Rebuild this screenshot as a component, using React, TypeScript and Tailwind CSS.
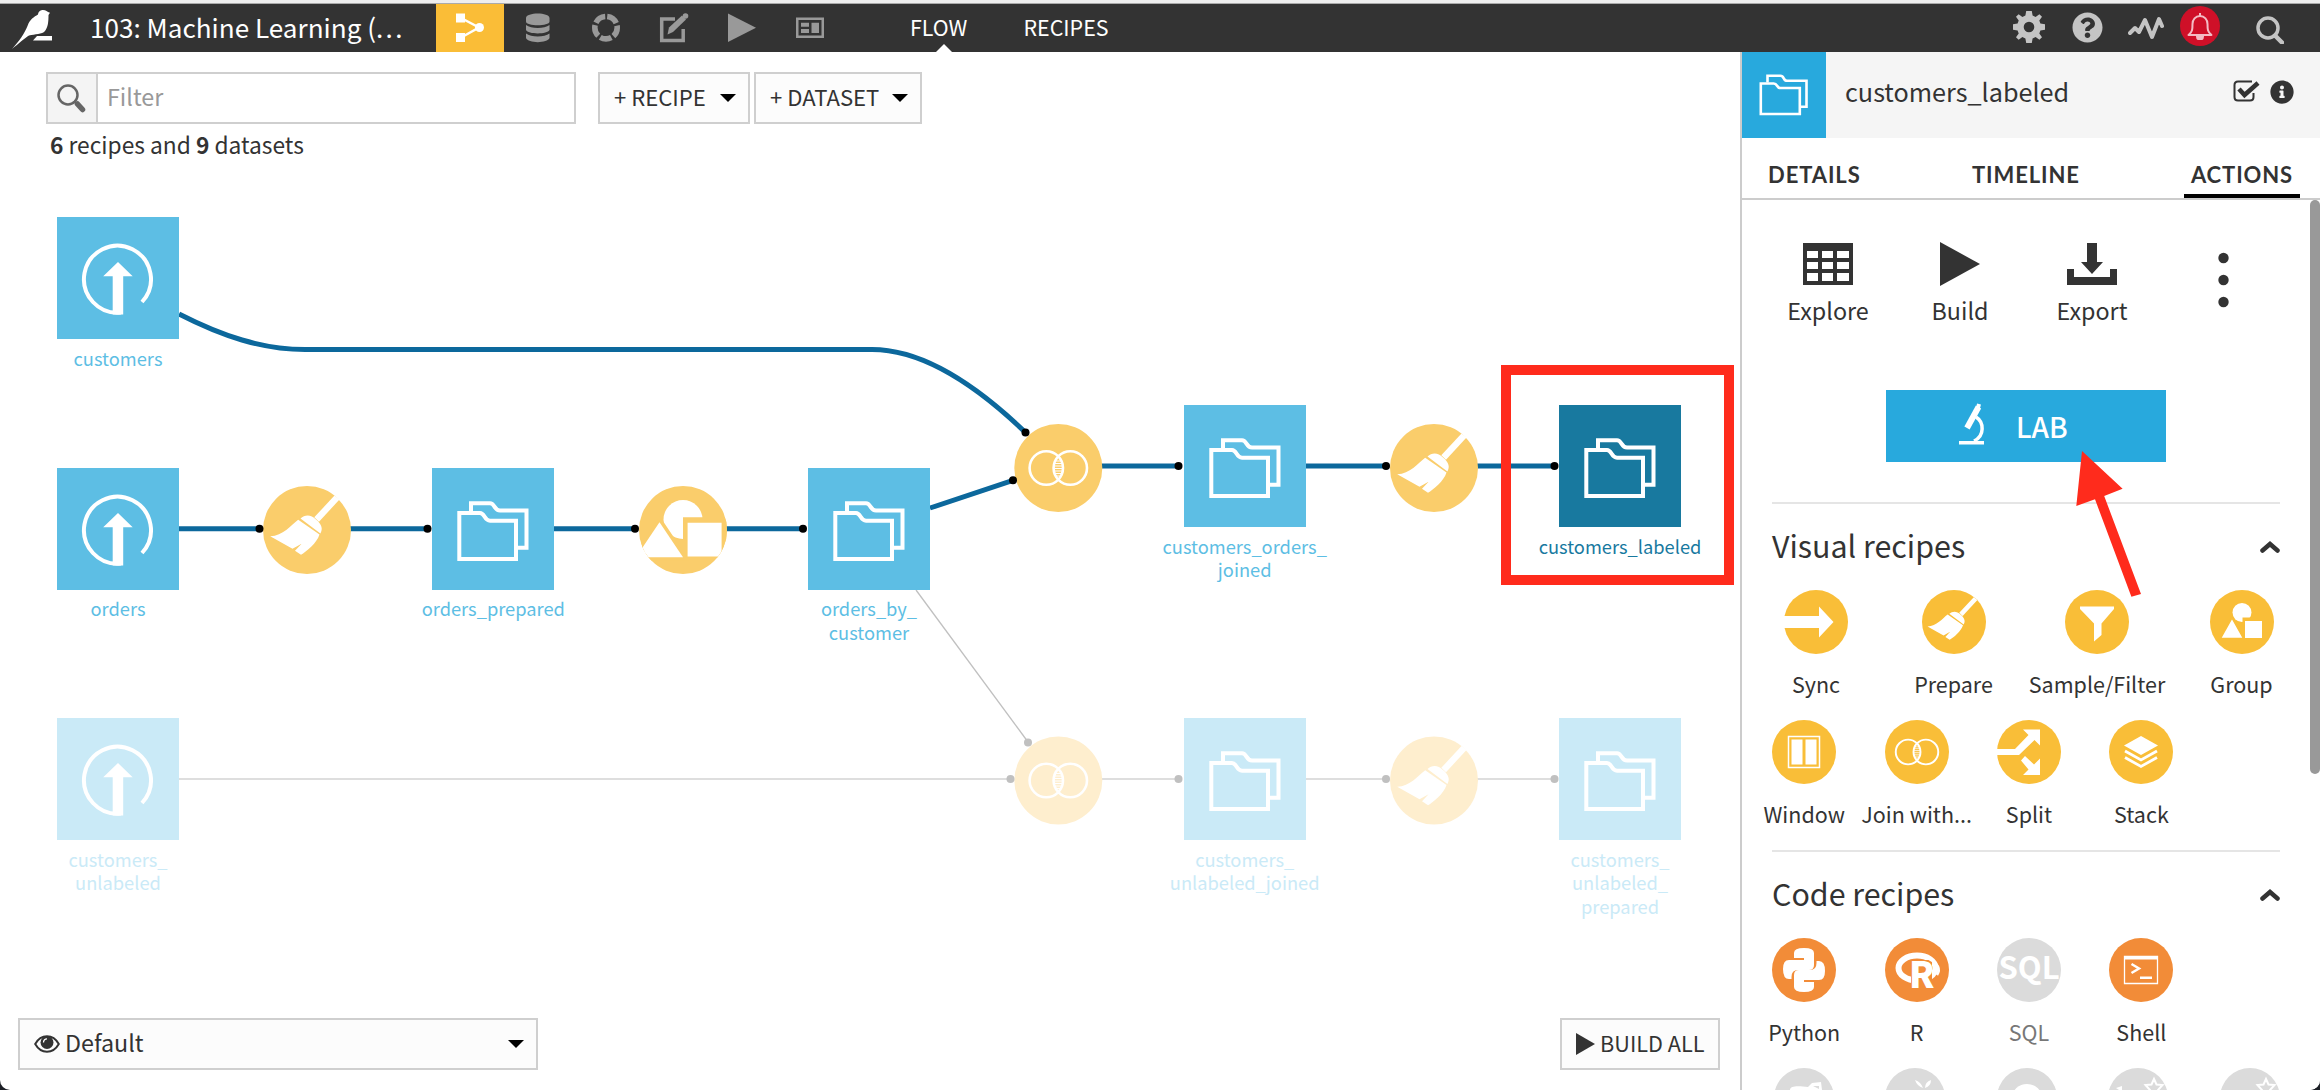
import React from "react";
import { FaQuestionCircle, FaInfoCircle } from "react-icons/fa";

const YELLOW = "#f9be38";
const ORANGE = "#f28c38";
const GREY = "#dbdbdb";

/* ---------- shared glyphs ---------- */

function Folders() {
  return (
    <g fill="none" stroke="#fff" strokeWidth="4">
      <path d="M27.3 45H48c5 0 4 7.7 10 7.7h26V91H27.3z" />
      <path d="M39 44V35.2h19c5 0 4 7.3 10 7.3h26.5v37.3H85" />
    </g>
  );
}

function Upload() {
  return (
    <g>
      <path d="M64 95.5A33.5 33.5 0 1 1 85 85" fill="none" stroke="#fff" strokeWidth="4" />
      <path d="M61 45l14.700 14.200h-9.500V97.500h-10.500V59.200h-9.500z" fill="#fff" />
    </g>
  );
}

function Broom() {
  return (
    <g fill="#fff">
      <path d="M27.500-34.500L32.500-30.500L12-8.300L7.300-12.700z" />
      <path d="M-6.500-11.500C-2-15.500 4-15.500 9-10.500C15-5.500 16-1 13.400 3.500z" />
      <path d="M-8.800-10.300L12.500 4.500C10 13-1 22-6 24.700L-12 20.700L-5.400 13.700L-14.500 18.700L-36.800 6.300C-24 6-16-5-8.800-10.300z" />
    </g>
  );
}

function Join() {
  return (
    <g fill="none" stroke="#fff" strokeWidth="2.600">
      <circle cx="-12" cy="0" r="16.700" />
      <circle cx="12" cy="0" r="16.700" />
      <path strokeWidth="1" d="M-3-7H3M-4-4.500H4M-4-2H4M-4 .5H4M-4 3H4M-4 5.500H4M-3 8H3" />
    </g>
  );
}

function Shapes({ bg }: { bg: string }) {
  return (
    <g fill="#fff" clipPath="url(#disc)">
      <circle cx="0" cy="-10.500" r="19.500" />
      <path d="M-23.500-7.700L0 27.300H-47z" stroke={bg} strokeWidth="7" />
      <path d="M0-12.700H44V28H0z" fill={bg} />
      <path d="M-23.500-7.700L0 27.300H-47z" />
      <path d="M4.600-7.300H38.600V26.500H4.600z" />
    </g>
  );
}

/* ---------- top bar ---------- */

function TopBar() {
  return (
    <header className="flex h-[52px] shrink-0 flex-col bg-[#333] text-[#999]">
      <div className="h-1 shrink-0 border-b border-[#aaa] bg-[#eee]" />
      <div className="flex h-12 items-stretch">
        <svg className="h-12 w-[90px]" viewBox="0 4 90 48">
          <path fill="#fff" d="M12 49C20 40 24 34 27.500 26C30 19 34 17 38 14.500C38.500 11 41 10 43 10C46 10 47 12 50 12.700L48.500 15C48.500 22 48 27 45 31C42 34.500 35 34 29 35.500C25 38 18 44 12 49z" />
          <path fill="#fff" d="M37 36h15v4.500H33z" />
        </svg>
        <div className="w-[346px] whitespace-nowrap text-[26.100px] leading-[46px] text-white">103: Machine Learning (<span className="tracking-[2.300px]">...</span></div>
        <div className="flex h-12 w-[68px] bg-[#fabd37]">
          <svg className="h-12 w-[68px]" viewBox="436 4 68 48">
            <path d="M456 13.500h9v9h-9zM456 33h9v9h-9z" fill="#fff" />
            <circle cx="479.500" cy="27.500" r="4.500" fill="#fff" />
            <path d="M462 18.500L479 27.500L462 37" fill="none" stroke="#fff" strokeWidth="2.500" />
          </svg>
        </div>
        <svg className="h-12 w-[340px]" viewBox="504 4 340 48">
          <g fill="#999">
            <path d="M526 18c0-6 23.500-6 23.500 0v3.500c0 5-23.500 5-23.500 0zM526 25c5 4 18.500 4 23.500 0v5c-2 4.500-21.500 4.500-23.500 0zM526 33.500c5 4 18.500 4 23.500 0v4.500c-2 5.500-21.500 5.500-23.500 0z" />
            <path d="M728 13.500l28 14.200l-28 14.200z" />
            <path d="M796 17.500h28v20.500h-28zM798.500 20v15.500h23V20z" fillRule="evenodd" />
            <path d="M801 22.800h8v4h-8zM801 29h8v4h-8zM811.500 22.800h7.500V33h-7.500z" />
          </g>
          <circle cx="606" cy="27.700" r="11.200" fill="none" stroke="#999" strokeWidth="5.600" strokeDasharray="11.570 2.500" strokeDashoffset="-1.250" transform="rotate(-90 606 27.700)" />
          <path d="M675 19h-13.300v21.500h21.500V29" fill="none" stroke="#999" strokeWidth="3.500" />
          <path d="M667.500 34.500l1.500-7l13-12l4 4L673 32z" fill="#999" />
          <circle cx="685.500" cy="16" r="2.800" fill="#999" />
        </svg>
        <nav className="flex h-12 text-[21.400px] leading-[46px] text-white">
          <div className="relative ml-[66px] w-[113.500px]">
            FLOW
            <svg className="absolute bottom-0 left-[26px] h-2 w-4" viewBox="0 0 16 8"><path d="M8 0l8 8H0z" fill="#fff" /></svg>
          </div>
          <div>RECIPES</div>
        </nav>
        <div className="mr-[36px] ml-auto flex h-12 items-center text-[#c4c4c4]">
          <svg className="mb-0.5 size-8" viewBox="-16 -16 32 32" fill="#c4c4c4">
            <path fillRule="evenodd" d="M-2.800-16H2.800L3.600-11.400L6.600-10.100L10.400-12.800L13-10.200L10.300-6.400L11.400-3.500L16-2.700V2.700L11.400 3.500L10.300 6.400L13 10.200L10.400 12.800L6.600 10.100L3.600 11.400L2.800 16H-2.800L-3.600 11.400L-6.600 10.100L-10.400 12.800L-13 10.200L-10.300 6.400L-11.400 3.500L-16 2.700V-2.700L-11.400-3.500L-10.300-6.400L-13-10.200L-10.400-12.800L-6.600-10.100L-3.600-11.400zM0-5.300A5.300 5.300 0 1 0 0 5.300A5.300 5.300 0 1 0 0-5.300z" />
          </svg>
          <FaQuestionCircle className="mb-0.5 ml-[27px] size-[31px]" />
          <svg className="ml-[25px] h-6 w-9" viewBox="0 0 36 24" fill="none" stroke="#c4c4c4" strokeWidth="4" strokeLinecap="round" strokeLinejoin="round">
            <path d="M2 17l5-5l4 4l6-12l7 17l7-18l3 7" />
          </svg>
          <div className="mb-1 ml-4 flex size-10 items-center justify-center rounded-full bg-[#cf1028]">
            <svg className="size-7" viewBox="0 0 28 28" fill="none" stroke="#f3bcc4" strokeWidth="2">
              <path d="M14 1v3M2.500 23c4-3 4-6 4-11c0-4.500 3-8 7.500-8s7.500 3.500 7.500 8c0 5 0 8 4 11z" strokeLinejoin="round" />
              <path d="M11 24.500h6c0 4-6 4-6 0z" fill="#f3bcc4" />
            </svg>
          </div>
          <svg className="mt-1 ml-9 h-7 w-7" viewBox="0 0 28 28" fill="none" stroke="#c4c4c4">
            <circle cx="12" cy="12" r="10" strokeWidth="3.500" />
            <path d="M19 19.500l7 7" strokeWidth="4.500" strokeLinecap="round" />
          </svg>
        </div>
      </div>
    </header>
  );
}

/* ---------- flow canvas ---------- */

type DatasetNode = { x: number; y: number; label: string[]; kind: "upload" | "folders"; tone?: "faded" | "selected" };

const datasets: DatasetNode[] = [
  { x: 57, y: 217.4, label: ["customers"], kind: "upload" },
  { x: 57, y: 467.5, label: ["orders"], kind: "upload" },
  { x: 432.3, y: 467.5, label: ["orders_prepared"], kind: "folders" },
  { x: 808, y: 467.5, label: ["orders_by_", "customer"], kind: "folders" },
  { x: 1183.7, y: 405, label: ["customers_orders_", "joined"], kind: "folders" },
  { x: 1559, y: 405, label: ["customers_labeled"], kind: "folders", tone: "selected" },
  { x: 57, y: 718, label: ["customers_", "unlabeled"], kind: "upload", tone: "faded" },
  { x: 1183.7, y: 718, label: ["customers_", "unlabeled_joined"], kind: "folders", tone: "faded" },
  { x: 1559, y: 718, label: ["customers_", "unlabeled_", "prepared"], kind: "folders", tone: "faded" },
];

const recipes = [
  { x: 307, y: 530, kind: "broom", faded: false },
  { x: 683, y: 530, kind: "shapes", faded: false },
  { x: 1058.3, y: 468, kind: "join", faded: false },
  { x: 1434, y: 468, kind: "broom", faded: false },
  { x: 1058.3, y: 780.5, kind: "join", faded: true },
  { x: 1434, y: 780.5, kind: "broom", faded: true },
];

function Dataset({ node }: { node: DatasetNode }) {
  const box = node.tone === "faded" ? "bg-[#caeaf7]" : node.tone === "selected" ? "bg-[#18799f]" : "bg-[#5dbee4]";
  const text = node.tone === "faded" ? "text-[#caeaf7]" : node.tone === "selected" ? "text-[#18799f]" : "text-[#5dbee4]";
  return (
    <div className="absolute flex w-[222px] flex-col items-center" style={{ left: node.x - 50, top: node.y - 52 }}>
      <div className={"size-[122px] " + box}>
        <svg viewBox="0 0 122 122">{node.kind === "upload" ? <Upload /> : <Folders />}</svg>
      </div>
      <div className={"mt-[7.600px] text-center text-[18.300px] leading-[23.500px] whitespace-nowrap " + text}>
        {node.label.map((line) => (
          <div key={line}>{line}</div>
        ))}
      </div>
    </div>
  );
}

function Flow() {
  return (
    <div className="absolute inset-0">
      <svg className="absolute inset-0" width="1740" height="1038" viewBox="0 52 1740 1038">
        <defs>
          <clipPath id="disc"><circle r="44" /></clipPath>
        </defs>
        <g stroke="#0c689c" strokeWidth="5" fill="none">
          <path d="M179 314C222 336 262 349.500 305 349.500H872C922 349.500 975 384 1025 432" />
          <path d="M179 528.700H259M349 528.700H427M554 528.700H635M725 528.700H803M930 508L1013 480.300M1100 466H1178M1305 466H1386M1476 466H1554" />
        </g>
        <path d="M916 590L1028 742" stroke="#c0c0c0" strokeWidth="1.300" />
        <path d="M179 779H1010M1100 779H1178M1305 779H1386M1476 779H1554" stroke="#dedede" strokeWidth="2" />
        {recipes.map((r) => {
          const bg = r.faded ? "#feeece" : "#facd6b";
          return (
            <g key={r.x + "-" + r.y} transform={"translate(" + r.x + " " + r.y + ")"}>
              <circle r="44" fill={bg} />
              {r.kind === "broom" ? <Broom /> : r.kind === "join" ? <Join /> : <Shapes bg={bg} />}
            </g>
          );
        })}
        {[[259.5, 528.7], [427.5, 528.7], [635, 528.7], [803, 528.7], [1025.5, 432.5], [1013, 480.3], [1178.5, 466], [1386, 466], [1554.5, 466]].map(([x, y]) => (
          <circle key={x + "," + y} cx={x} cy={y} r="4" />
        ))}
        {[[1028, 742.5], [1010.5, 779], [1178.5, 779], [1386, 779], [1554.5, 779]].map(([x, y]) => (
          <circle key={x + "," + y} cx={x} cy={y} r="4" fill="#c0c0c0" />
        ))}
      </svg>
      {datasets.map((d) => (
        <Dataset key={d.x + "-" + d.y} node={d} />
      ))}
      <div className="absolute top-[313px] left-[1501px] h-[220px] w-[233px] border-[10px] border-[#ff2b1c]" />
    </div>
  );
}

function Caret() {
  return <svg className="h-2 w-4" viewBox="0 0 16 8"><path d="M0 0h16L8 8z" /></svg>;
}

function Canvas() {
  return (
    <main className="relative flex w-[1740px] shrink-0 flex-col">
      <Flow />
      <div className="relative mt-5 ml-[46px] flex h-[52px] text-[22.100px] leading-[45px]">
        <div className="flex w-[530px] border-2 border-[#cfcfcf] bg-white">
          <div className="w-[50px] border-r-2 border-[#cfcfcf] bg-[#f4f4f4]">
            <svg viewBox="0 0 48 48" fill="none" stroke="#666">
              <circle cx="20" cy="21" r="9.500" strokeWidth="2.500" />
              <path d="M29.500 30l5 5.500" strokeWidth="5.500" strokeLinecap="round" />
              <path d="M26 27l4 4" strokeWidth="2" />
            </svg>
          </div>
          <div className="pl-[9px] text-[23.300px] text-[#999]">Filter</div>
        </div>
        <div className="ml-[22px] flex w-[152px] justify-between border-2 border-[#cfcfcf] bg-[#fcfcfc] pr-3 pl-3.5">+ RECIPE <span className="flex items-center"><Caret /></span></div>
        <div className="ml-1 flex w-[168px] justify-between border-2 border-[#cfcfcf] bg-[#fcfcfc] pr-3 pl-3.5">+ DATASET <span className="flex items-center"><Caret /></span></div>
      </div>
      <div className="relative mt-[5px] ml-[50px] text-[22.750px] leading-8"><b>6</b> recipes and <b>9</b> datasets</div>
      <div className="relative mt-auto mb-5 flex h-[52px] justify-between pr-5 pl-[18px] leading-[45px]">
        <div className="flex w-[520px] border-2 border-[#cfcfcf] bg-[#fcfcfc] pr-3 pl-3.5 text-[23.300px]">
          <svg className="mt-[15px] mr-[5px] h-[18px] w-[26px]" viewBox="0 0 26 18">
            <path d="M1.200 9C7-1.300 19-1.300 24.800 9C19 19.300 7 19.300 1.200 9z" fill="none" stroke="#333" strokeWidth="2" />
            <circle cx="13" cy="7.500" r="6.500" fill="#333" />
            <path d="M9.500 7.500c0-2.500 1.500-3.700 3.500-3.700" fill="none" stroke="#fff" strokeWidth="1.300" />
          </svg>
          Default
          <span className="ml-auto flex items-center"><Caret /></span>
        </div>
        <div className="flex w-[160px] border-2 border-[#cfcfcf] bg-[#fcfcfc] pl-3.5 text-[21.700px] leading-[46px] whitespace-nowrap">
          <svg className="mt-[13px] mr-1 h-[22px] w-5" viewBox="0 0 20 22"><path d="M0 0l19 11L0 22z" fill="#333" /></svg>
          BUILD ALL
        </div>
      </div>
    </main>
  );
}

/* ---------- side panel ---------- */

function RecipeButton({ label, color, width, muted, children }: { label: string; color: string; width: string; muted?: boolean; children: React.ReactNode }) {
  return (
    <div className={"flex flex-col items-center " + width}>
      <svg className="size-16 shrink-0" viewBox="-32 -32 64 64">
        <circle r="32" fill={color} />
        {children}
      </svg>
      <div className={"mt-[13px] text-[21.500px] leading-[33px] whitespace-nowrap " + (muted ? "text-[#777]" : "text-[#333]")}>{label}</div>
    </div>
  );
}

function SectionTitle({ children }: { children: React.ReactNode }) {
  return (
    <div className="flex h-[44px] items-center justify-between text-[30.400px] leading-[40px]">
      <span className="h-[44px]">{children}</span>
      <svg className="h-3 w-5" viewBox="0 0 20 12"><path d="M2.500 9.500L10 3l7.500 6.500" fill="none" stroke="#333" strokeWidth="4.500" strokeLinecap="round" /></svg>
    </div>
  );
}

const snake = "M0-12H-10V-17Q-10-22 0-22Q10-22 10-17V-5Q10 0 5 0H-6Q-12.500 0-12.500 7V9H-15Q-21 9-21-1Q-21-10-15-10H0z";

function Panel() {
  return (
    <aside className="relative flex w-[580px] flex-col overflow-hidden border-l-2 border-[#ccc] bg-white">
      <div className="flex h-[86px] shrink-0 items-center bg-[#f5f5f5]">
        <div className="h-[86px] w-[84px] bg-[#28a9dd]">
          <svg className="h-[86px] w-[84px]" viewBox="0 0 84 86" fill="none" stroke="#fff" strokeWidth="2.600">
            <path d="M18.800 31.500h13c4 0 2.500 4.500 6.500 4.500h19.500v26h-39z" />
            <path d="M25.500 30.500v-6.700h13c4 0 2.500 5 6.500 5h19.500v26h-6" />
          </svg>
        </div>
        <div className="ml-[19px] pb-[9px] text-[25.200px] leading-9">customers_labeled</div>
        <svg className="mb-2 ml-auto h-6 w-7" viewBox="0 0 28 24">
          <path d="M20 2.500H6q-3.500 0-3.500 3.500v12q0 3.500 3.500 3.500h12q3.500 0 3.500-3.500V14" fill="none" stroke="#333" strokeWidth="2" />
          <path d="M7 10l5.500 6L26 4" fill="none" stroke="#333" strokeWidth="4.500" />
        </svg>
        <FaInfoCircle className="mr-[26px] mb-1.5 ml-2.5 size-6" />
      </div>
      <div className="flex h-[62px] shrink-0 items-end border-b-2 border-[#ccc] pr-5 pl-[26px] font-[Lato,sans-serif] text-[22px] leading-[37px] font-bold tracking-[0.900px]">
        <span className="h-[42px] w-[204px]">DETAILS</span>
        <span className="h-[42px]">TIMELINE</span>
        <span className="ml-auto h-[42px] w-[116px] border-b-4 border-black text-center tracking-[0.900px]">ACTIONS</span>
      </div>
      <div className="flex flex-col pr-[40px] pl-[30px]">
        <div className="mt-[42px] flex h-[84px] text-center text-[23.300px] leading-8">
          <div className="flex w-[112px] flex-col items-center">
            <svg className="h-[44px] w-[52px]" viewBox="0 0 52 44">
              <path fill="#333" fillRule="evenodd" d="M1 1h50v42H1zM5 9v7h11V9zM20 9v7h11V9zM35 9v7h12V9zM5 20v7h11v-7zM20 20v7h11v-7zM35 20v7h12v-7zM5 31v8h11v-8zM20 31v8h11v-8zM35 31v8h12v-8z" />
            </svg>
            <span className="mt-2">Explore</span>
          </div>
          <div className="ml-5 flex w-[112px] flex-col items-center">
            <svg className="h-[44px] w-10" viewBox="0 0 40 44"><path d="M0 0l40 22L0 44z" fill="#333" /></svg>
            <span className="mt-2">Build</span>
          </div>
          <div className="ml-5 flex w-[112px] flex-col items-center">
            <svg className="h-[44px] w-[52px]" viewBox="0 0 52 44"><path fill="#333" d="M21 1h10v19h6L26 32L15 20h6zM1 27h7v8h36v-8h7v16H1z" /></svg>
            <span className="mt-2">Export</span>
          </div>
          <svg className="mt-2.5 ml-[70px] h-[56px] w-[11px]" viewBox="0 0 11 56" fill="#333"><circle cx="5.500" cy="6" r="5.200" /><circle cx="5.500" cy="28" r="5.200" /><circle cx="5.500" cy="50" r="5.200" /></svg>
        </div>
        <div className="mt-16 ml-[114px] flex h-[72px] w-[280px] items-center bg-[#28a9dd] pl-[73px] text-[28px] leading-[66px] font-medium text-white">
          <svg className="mr-[31px] mb-1 h-[42px] w-[26px]" viewBox="0 0 26 42">
            <path d="M0 38h25v3.500H0z" fill="#fff" />
            <path d="M17 14c8 5 9 19-2 24" fill="none" stroke="#fff" strokeWidth="3.500" />
            <path d="M19.500 4L8 25" stroke="#fff" strokeWidth="6" />
            <path d="M20 1l-1 4" stroke="#fff" strokeWidth="4" />
          </svg>
          LAB
        </div>
        <div className="mt-10 mb-[21px] h-0.5 bg-[#e5e5e5]" />
        <SectionTitle>Visual recipes</SectionTitle>
        <div className="mt-[21px] flex h-[108px]">
          <RecipeButton label="Sync" color={YELLOW} width="w-[88px]"><path d="M-32-6H3v-9.500L17.500 0L3 15.500V6h-35z" fill="#fff" /></RecipeButton>
          <RecipeButton label="Prepare" color={YELLOW} width="w-[187px]"><g transform="scale(.72)"><Broom /></g></RecipeButton>
          <RecipeButton label="Sample/Filter" color={YELLOW} width="w-[100px]"><path d="M-17-15.500H17V-13L4.500 1.500V13L-3 19.500V1.500L-17-13z" fill="#fff" /></RecipeButton>
          <RecipeButton label="Group" color={YELLOW} width="w-[189px] -mr-[56px]">
            <circle cy="-9.500" r="9.500" fill="#fff" />
            <path d="M.5-4.500H22V18H.5z" fill={YELLOW} />
            <path d="M-10-4L1.500 16.500H-21.500z" fill="#fff" stroke={YELLOW} strokeWidth="1.500" />
            <path d="M3-1H20V16H3z" fill="#fff" />
          </RecipeButton>
        </div>
        <div className="mt-[22px] -ml-6 flex h-[108px]">
          <RecipeButton label="Window" color={YELLOW} width="w-[112.400px]"><path d="M-15.500-15.500H15.500V15.500H-15.500z" fill="none" stroke="#fff" strokeWidth="1.500" /><path d="M-12.500-12.500H-1.500V12.500H-12.500zM1.500-12.500H12.500V12.500H1.500z" fill="#fff" /></RecipeButton>
          <RecipeButton label="Join with..." color={YELLOW} width="w-[112.400px]"><g transform="scale(.74)"><Join /></g></RecipeButton>
          <RecipeButton label="Split" color={YELLOW} width="w-[112.400px]"><path d="M-32-3H-14L-.500-17L-6-22.500H11V-6.500L5.500-12L-10 3H-32zM-8 8.500L-4 4L5 12.500L11 6.500V23H-6L-.500 17.500z" fill="#fff" /></RecipeButton>
          <RecipeButton label="Stack" color={YELLOW} width="w-[112.400px]"><path d="M0-16L17-6.500L0 3L-17-6.500z" fill="#fff" /><path d="M-16-1L0 8L16-1M-16 5.500L0 14.500L16 5.500" fill="none" stroke="#fff" strokeWidth="2.800" /></RecipeButton>
        </div>
        <div className="mt-[22px] mb-[21px] h-0.5 bg-[#e5e5e5]" />
        <SectionTitle>Code recipes</SectionTitle>
        <div className="mt-[21px] -ml-6 flex h-[108px]">
          <RecipeButton label="Python" color={ORANGE} width="w-[112.400px]"><path d={snake} fill="#fff" /><path d={snake} fill="#fff" transform="rotate(180)" /></RecipeButton>
          <RecipeButton label="R" color={ORANGE} width="w-[112.400px]">
            <ellipse cx="0" cy="-2" rx="18.500" ry="12.500" fill="none" stroke="#fff" strokeWidth="6" />
            <path d="M-6-10H15V18H-6z" fill={ORANGE} />
            <text x="-8" y="17.500" fontSize="36" fontWeight="900" fill="#fff" fontFamily="Noto Sans CJK SC, sans-serif">R</text>
            <path d="M12-11Q26-4 20 5" fill="none" stroke="#fff" strokeWidth="2.500" />
          </RecipeButton>
          <RecipeButton label="SQL" color={GREY} width="w-[112.400px]" muted><text x="0" y="9" textAnchor="middle" fontSize="31" fontWeight="700" fill="#fff" fontFamily="Noto Sans CJK SC, sans-serif">SQL</text></RecipeButton>
          <RecipeButton label="Shell" color={ORANGE} width="w-[112.400px]"><path d="M-16.500-13.500H16.500V13.500H-16.500z" fill="none" stroke="#fff" strokeWidth="1.300" /><path d="M-17-14H17V-10.500H-17z" fill="#fff" /><path d="M-9.500-6L-2-1.500L-9.500 3" fill="none" stroke="#fff" strokeWidth="2.500" /><path d="M-1 6.500H11V9H-1z" fill="#fff" /></RecipeButton>
        </div>
        <div className="mt-[22px] -ml-6 flex w-[565px] shrink-0">
          {[0, 1, 2, 3, 4].map((i) => (
            <div key={i} className="flex w-[111.500px] justify-center">
              <svg className="h-[60px] w-[60px]" viewBox="0 0 60 60">
                <circle cx="30" cy="30" r="30" fill={GREY} />
                {i === 0 && <path d="M16 22C16 17 26 18 34 19L38 15L47 14L48 22L42 30H16z" fill="#fff" />}
                {i === 0 && <path d="M39 18h6v3z" fill={GREY} />}
                {i === 1 && <path d="M30 12q6 2 8 8q-6-2-8-8M46 12q-6 2-6 8q6-2 6-8" fill="#fff" />}
                {i === 2 && <path d="M15 30a15 14 0 0 1 30 0z" fill="#fff" />}
                {i > 2 && <path d="M46 11l2.500 5.500l6 .5l-4.500 5l2 7l-6-4l-6 4l2-7l-4.500-5l6-.5z" fill="none" stroke="#fff" strokeWidth="2" />}
                {i === 3 && <path d="M8 20l6-2v6z" fill="#fff" />}
              </svg>
            </div>
          ))}
        </div>
      </div>
      <div className="absolute top-[148px] right-0 h-[574px] w-2.5 rounded-[5px] bg-[#999]" />
      <svg className="absolute top-[390px] left-[320px] h-[170px] w-[90px]" viewBox="2062 442 90 170">
        <path d="M2082 451L2122.600 488.700L2104.200 496L2141 594L2131.400 596.700L2095 499.300L2076.300 506z" fill="#ff2b1c" />
      </svg>
    </aside>
  );
}

export default function App() {
  return (
    <div className="h-[1090px] w-[2320px] bg-[#1c1f26]">
      <div className="flex h-full flex-col overflow-hidden rounded-b-[10px] bg-white font-['Noto_Sans_CJK_SC',sans-serif] text-[#333]">
        <TopBar />
        <div className="flex min-h-0 flex-1">
          <Canvas />
          <Panel />
        </div>
      </div>
    </div>
  );
}
